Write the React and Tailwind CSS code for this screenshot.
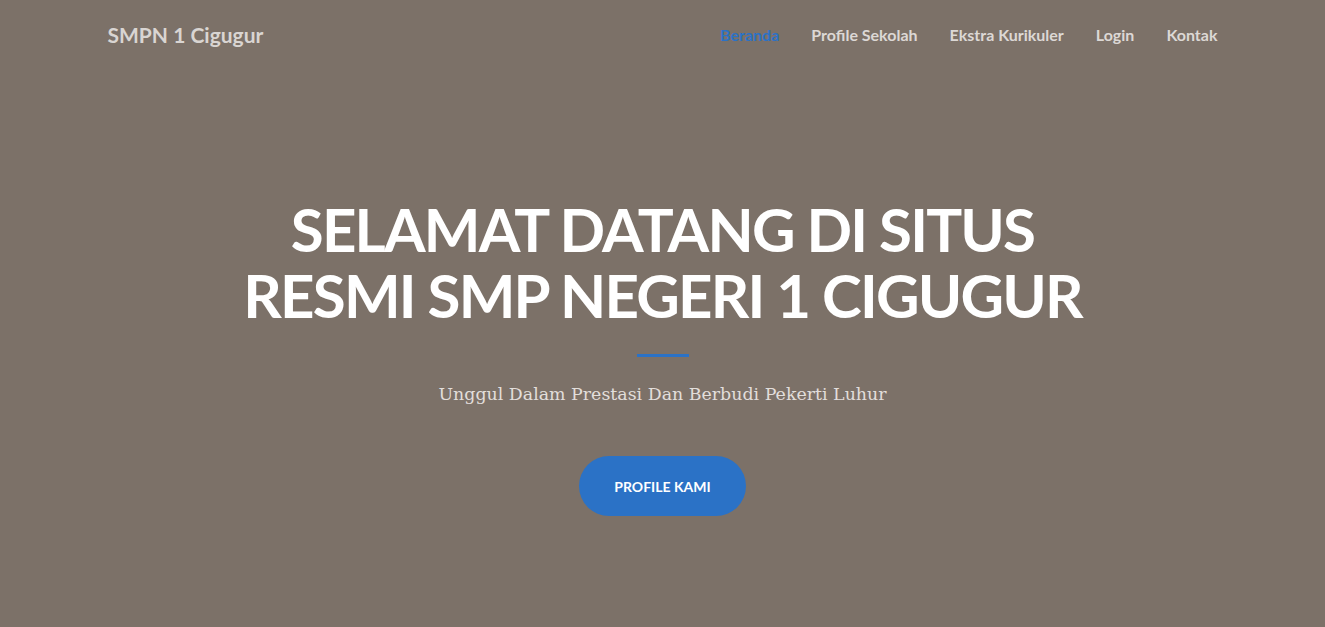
export default function App() {
  const links = ['Beranda', 'Profile Sekolah', 'Ekstra Kurikuler', 'Login', 'Kontak']

  return (
    <div className="min-h-[627px] bg-[#7c7168] font-['Lato','Open_Sans',sans-serif]">
      <nav className="mx-auto flex h-[70px] max-w-[1140px] items-center justify-between px-[15px]">
        <a className="text-[21px] font-bold text-[#d9d5d2]" href="#">SMPN 1 Cigugur</a>
        <ul className="flex items-center gap-[32px]">
          {links.map((l, i) => (
            <li key={l}>
              <a
                href="#"
                className={`text-[16px] font-bold ${i === 0 ? 'text-[#2b72c6]' : 'text-[#dcd8d5]'}`}
              >
                {l}
              </a>
            </li>
          ))}
        </ul>
      </nav>

      <header className="flex flex-col items-center pt-[126px] text-center">
        <h1 className="max-w-[900px] text-[60px] font-bold uppercase leading-[66px] tracking-[-1.8px] text-white">
          Selamat Datang di Situs Resmi SMP Negeri 1 Cigugur
        </h1>
        <hr className="mt-[26px] w-[52px] border-t-[3px] border-[#2b72c6]" />
        <p className="mt-[24px] font-['DejaVu_Serif','Liberation_Serif',serif] text-[17.4px] text-[#e2dedb]">
          Unggul Dalam Prestasi Dan Berbudi Pekerti Luhur
        </p>
        <a
          href="#"
          className="mt-[49px] flex h-[60px] w-[167px] items-center justify-center rounded-full bg-[#2b72c6] text-[14px] font-bold uppercase text-white"
        >
          Profile Kami
        </a>
      </header>
    </div>
  )
}
